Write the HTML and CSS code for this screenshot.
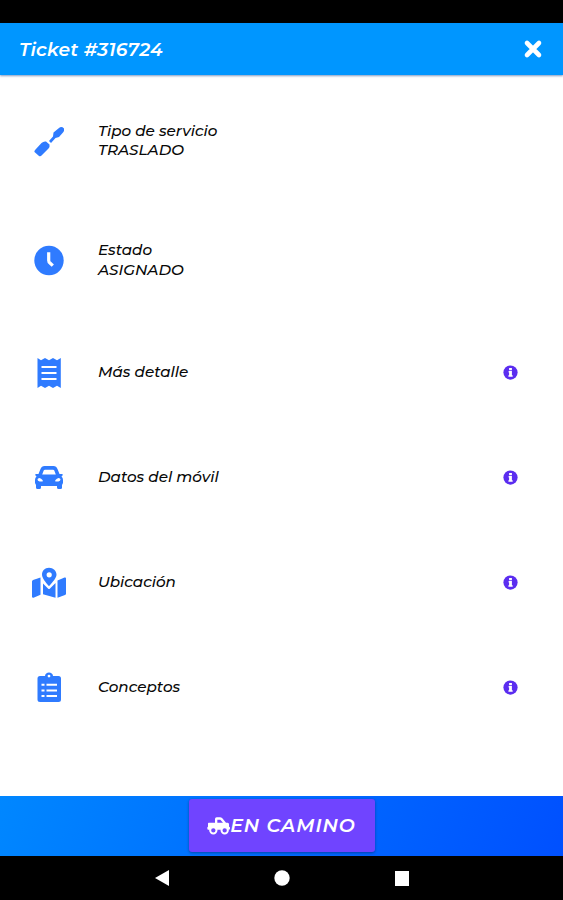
FILE: index.html
```html
<!DOCTYPE html>
<html lang="es">
<head>
  <meta charset="UTF-8" />
  <title>Ticket #316724</title>
  <link rel="stylesheet" href="styles.css">
</head>
<body>
  <div class="status-bar"></div>

  <header class="toolbar">
    <h1>Ticket #316724</h1>
    <svg class="close" viewBox="0 0 20 20"><path d="M4 4L16 16M16 4L4 16" /></svg>
  </header>

  <!-- detalle del ticket -->
  <main class="list">
    <div class="item double">
      <svg class="icon" viewBox="0 0 36 36">
        <path d="M4.500 26.500L10.500 20Q12.500 18 15 18.500L18.500 21.500Q19 23.500 17.500 25.500L11 32Q9.500 34 8 33L3.500 29Q2.800 28 4.500 26.500Z" />
        <path d="M18 18L22 13.500L22.500 9.500L28 5Q30.500 3 33 5.500Q33.500 7.500 32 9.500L28 14L24.500 15L20 20Z" />
      </svg>
      <p>Tipo de servicio<br>TRASLADO</p>
    </div>
    <div class="item double">
      <svg class="icon" viewBox="0 0 36 36">
        <circle cx="18" cy="18.500" r="14.700" />
        <path class="line hand" d="M17.700 10.200V18.500Q17.700 20 19 21L21.800 23.700" />
      </svg>
      <p>Estado<br>ASIGNADO</p>
    </div>
    <div class="item">
      <svg class="icon" viewBox="0 0 36 36">
        <path d="M6.500 3L10 5.300L14 3L18 5.300L22 3L26 5.300L29.800 3V33L26 30.700L22 33L18 30.700L14 33L10 30.700L6.500 33Z" />
        <path class="line" d="M10.500 12H25.500M10.500 18H25.500M10.500 24H25.500" />
      </svg>
      <p>Más detalle</p>
      <svg class="info" viewBox="0 0 16 16"><circle cx="8" cy="8" r="7.600" /><path d="M6.500 3.200H9.500V5.500H6.500ZM6 6.500H9.500V10.800H10.300V12.500H5.800V10.800H6.500V8H6Z" /></svg>
    </div>
    <div class="item">
      <svg class="icon" viewBox="0 0 36 36">
        <path fill-rule="evenodd" d="M7.500 14L9.500 9Q10.600 6 13.500 6H22.500Q25.400 6 26.500 9L28.500 14H31Q32 14 31.700 15.200L30.500 16.500Q32 17.500 32 20V23L31 25V28Q31 29 29.500 29H27.500Q26 29 26 27.500V26H10V27.500Q10 29 8.500 29H6.500Q5 29 5 27.500V25L4 23V20Q4 17.500 5.500 16.500L4.300 15.200Q4 14 5 14ZM11.200 14.500H24.800L23.300 10.500Q23 9.700 22 9.700H14Q13 9.700 12.700 10.500ZM8.500 18Q6.500 18 6.500 19.600Q6.500 21.300 8.600 21.500H11.500Q12.200 21 11.500 20Q10.200 18.300 8.500 18ZM27.500 18Q25.800 18.300 24.500 20Q23.800 21 24.500 21.500H27.400Q29.500 21.300 29.500 19.600Q29.500 18 27.500 18Z" />
      </svg>
      <p>Datos del móvil</p>
      <svg class="info" viewBox="0 0 16 16"><circle cx="8" cy="8" r="7.600" /><path d="M6.500 3.200H9.500V5.500H6.500ZM6 6.500H9.500V10.800H10.300V12.500H5.800V10.800H6.500V8H6Z" /></svg>
    </div>
    <div class="item">
      <svg class="icon" viewBox="0 0 36 36">
        <path d="M1 16.500Q1 15.500 2 15L9.500 12.500V29.800L2.500 32.800Q1 33 1 31.700ZM12 18.500L17 23.500Q18 24.500 19 23.500L24.500 18V32.800L12 29.200ZM26.500 15.500L33.500 12.500Q35 12 35 13.500V28.500Q35 29.500 34 30L26.500 32.800Z" />
        <path fill-rule="evenodd" d="M18 2.800C13.800 2.800 11 5.900 11 9.600C11 13.300 14.700 17.500 17.300 20.500Q18 21.300 18.700 20.500C21.300 17.500 25.500 13.300 25.500 9.600C25.500 5.900 22.200 2.800 18 2.800ZM18.200 7.200A2.600 2.600 0 1 1 18.200 12.400A2.600 2.600 0 1 1 18.200 7.200Z" />
      </svg>
      <p>Ubicación</p>
      <svg class="info" viewBox="0 0 16 16"><circle cx="8" cy="8" r="7.600" /><path d="M6.500 3.200H9.500V5.500H6.500ZM6 6.500H9.500V10.800H10.300V12.500H5.800V10.800H6.500V8H6Z" /></svg>
    </div>
    <div class="item">
      <svg class="icon" viewBox="0 0 36 36">
        <path fill-rule="evenodd" d="M9 6H14C14 1.300 22 1.300 22 6H27.500Q30 6 30 8.500V29.500Q30 32 27.500 32H9Q6.500 32 6.500 29.500V8.500Q6.500 6 9 6ZM18 4.700A1.400 1.400 0 1 0 18 7.500A1.400 1.400 0 1 0 18 4.700Z" />
        <path class="line list-line" d="M10.500 14.800H13.500M15.500 14.800H26M10.500 20.500H13.500M15.500 20.500H26M10.500 26H13.500M15.500 26H26" />
      </svg>
      <p>Conceptos</p>
      <svg class="info" viewBox="0 0 16 16"><circle cx="8" cy="8" r="7.600" /><path d="M6.500 3.200H9.500V5.500H6.500ZM6 6.500H9.500V10.800H10.300V12.500H5.800V10.800H6.500V8H6Z" /></svg>
    </div>
  </main>

  <footer class="footer">
    <button class="btn">
      <svg class="truck" viewBox="0 0 69 54">
        <path fill-rule="evenodd" d="M5 17H24V6Q24 1 29 1H39Q43 1 46 4L57 17H62Q66 17 66 22V29Q69 29 69 32V35Q69 38 65 38H4Q1 38 1 35V32Q1 29 3 29V20Q3 17 5 17ZM31 8V17H48L40 8Z" />
        <circle class="wheel" cx="19" cy="40" r="9.500" />
        <circle class="wheel" cx="53" cy="40" r="9.500" />
      </svg>
      <span>EN CAMINO</span>
    </button>
  </footer>

  <nav class="nav-bar">
    <svg viewBox="0 0 16 18"><path d="M1 9L15 1V17Z" /></svg>
    <svg viewBox="0 0 16 18"><circle cx="8" cy="9" r="7.700" /></svg>
    <svg viewBox="0 0 16 18"><path d="M1 2H15V17H1Z" /></svg>
  </nav>
</body>
</html>
```

FILE: styles.css
```css
* {
  box-sizing: border-box;
}
body {
  margin: 0;
  height: 900px;
  display: flex;
  flex-direction: column;
  overflow: hidden;
  background: #fff;
  color: #080808;
  font-family: Montserrat, Inter, "Open Sans", sans-serif;
  font-style: italic;
}
h1, p {
  margin: 0;
}
svg {
  display: block;
  flex: none;
}

.status-bar {
  height: 23px;
  background: #000;
}
.toolbar {
  height: 52px;
  padding: 0 20px 0 19px;
  display: flex;
  align-items: center;
  justify-content: space-between;
  background: #0096ff;
  color: #fff;
  box-shadow: 0 1px 2px rgba(0, 50, 130, 0.5);
}
.toolbar h1 {
  font-size: 18.6px;
  font-weight: 600;
  letter-spacing: 0.25px;
}
.close {
  width: 20px;
  height: 20px;
  fill: none;
  stroke: #fff;
  stroke-width: 4.6;
  stroke-linecap: round;
}

.list {
  flex: 1;
  padding-top: 6px;
}
.item {
  height: 105px;
  padding: 0 45px 0 31px;
  display: flex;
  align-items: center;
}
.item.double {
  height: 119.5px;
}
.item p {
  flex: 1;
  margin-left: 31px;
  padding-bottom: 1.5px;
  font-size: 15.2px;
  line-height: 19.5px;
  font-weight: 500;
}
.icon {
  width: 36px;
  height: 36px;
  fill: #2f7bff;
}
.icon .line {
  fill: none;
  stroke: #fff;
  stroke-width: 2;
}
.icon .hand {
  stroke-width: 3.2;
}
.icon .list-line {
  stroke-width: 2;
}
.info {
  width: 15px;
  height: 15px;
  fill: #5b2df0;
}
.info path {
  fill: #fff;
}

.footer {
  height: 60px;
  display: flex;
  justify-content: center;
  padding-top: 3px;
  background: linear-gradient(110deg, #0087ff, #0050ff);
}
.btn {
  width: 186px;
  height: 53px;
  padding: 0;
  display: flex;
  align-items: center;
  justify-content: center;
  border: none;
  border-radius: 3px;
  background: #7044ff;
  color: #fff;
  font: inherit;
  font-size: 19px;
  font-weight: 600;
  letter-spacing: 1px;
  box-shadow: 0 1px 3px rgba(0, 0, 0, 0.35);
}
.truck {
  width: 23px;
  height: 18px;
  fill: #fff;
}
.wheel {
  fill: #7044ff;
  stroke: #fff;
  stroke-width: 6;
}

.nav-bar {
  height: 44px;
  display: flex;
  align-items: center;
  justify-content: center;
  gap: 104px;
  background: #000;
}
.nav-bar svg {
  width: 16px;
  height: 18px;
  fill: #fff;
}
```
